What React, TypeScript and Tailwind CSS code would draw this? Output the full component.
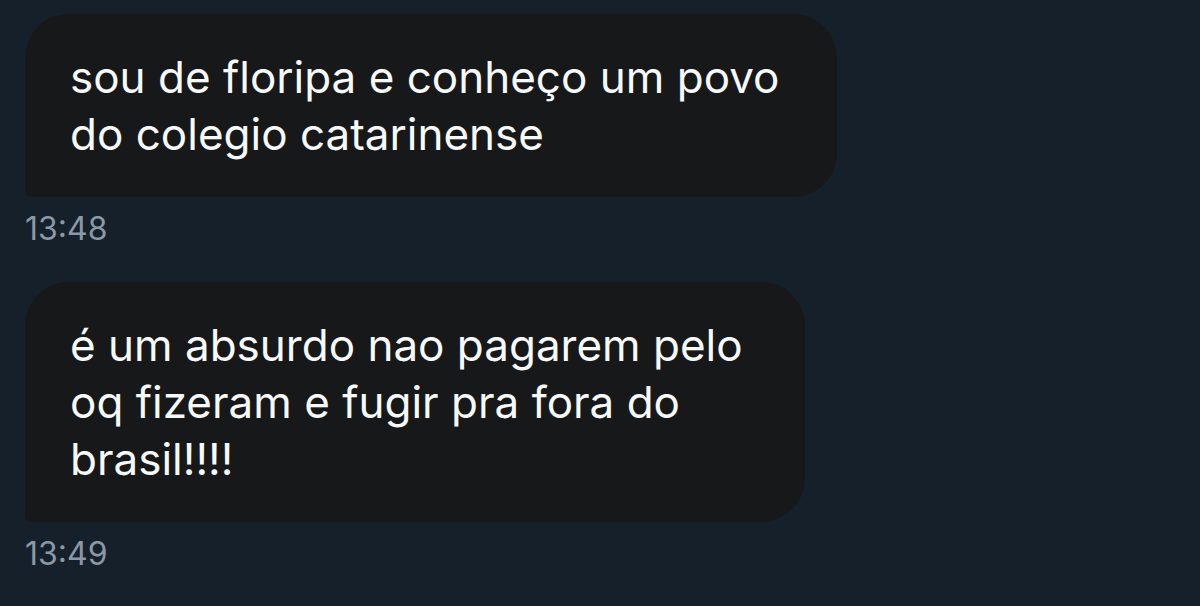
import React from "react";

const messages = [
  {
    lines: ["sou de floripa e conheço um povo", "do colegio catarinense"],
    time: "13:48",
    width: "w-[812px]",
  },
  {
    lines: ["é um absurdo nao pagarem pelo", "oq fizeram e fugir pra fora do", "brasil!!!!"],
    time: "13:49",
    width: "w-[780px]",
  },
];

const App: React.FC = () => {
  return (
    <div
      className="w-[1200px] h-[606px] bg-[#15202b] pl-[25px] pt-[14px] flex flex-col gap-[35px] overflow-hidden"
      style={{ fontFamily: "Inter, 'Liberation Sans', sans-serif" }}
    >
      {messages.map((msg, idx) => (
        <div key={idx} className="flex flex-col items-start">
          <div
            className={`${msg.width} bg-[#17181a] rounded-[44px] rounded-bl-[6px] pl-[45px] pr-[40px] pt-[35px] pb-[34px] text-[#f7f9f9] text-[44px] leading-[57px]`}
          >
            {msg.lines.map((line, i) => (
              <div key={i} className="whitespace-nowrap">
                {line}
              </div>
            ))}
          </div>
          <div className="mt-[14px] text-[32px] leading-[36px] text-[#8b98a5]">
            {msg.time}
          </div>
        </div>
      ))}
    </div>
  );
};

export default App;
